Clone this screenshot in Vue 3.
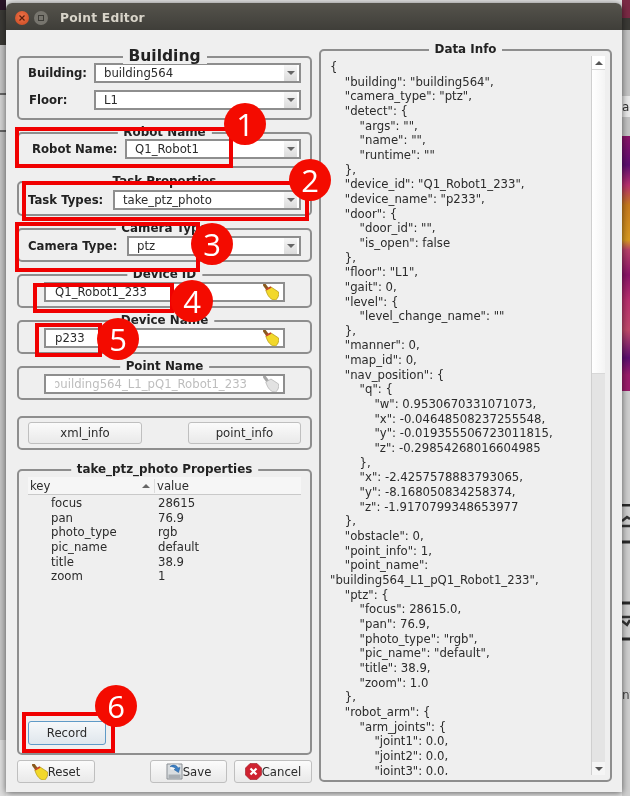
<script setup>
const jsonLines = [
  [0, '{'],
  [1, '"building": "building564",'],
  [1, '"camera_type": "ptz",'],
  [1, '"detect": {'],
  [2, '"args": "",'],
  [2, '"name": "",'],
  [2, '"runtime": ""'],
  [1, '},'],
  [1, '"device_id": "Q1_Robot1_233",'],
  [1, '"device_name": "p233",'],
  [1, '"door": {'],
  [2, '"door_id": "",'],
  [2, '"is_open": false'],
  [1, '},'],
  [1, '"floor": "L1",'],
  [1, '"gait": 0,'],
  [1, '"level": {'],
  [2, '"level_change_name": ""'],
  [1, '},'],
  [1, '"manner": 0,'],
  [1, '"map_id": 0,'],
  [1, '"nav_position": {'],
  [2, '"q": {'],
  [3, '"w": 0.9530670331071073,'],
  [3, '"x": -0.04648508237255548,'],
  [3, '"y": -0.019355506723011815,'],
  [3, '"z": -0.29854268016604985'],
  [2, '},'],
  [2, '"x": -2.4257578883793065,'],
  [2, '"y": -8.168050834258374,'],
  [2, '"z": -1.9170799348653977'],
  [1, '},'],
  [1, '"obstacle": 0,'],
  [1, '"point_info": 1,'],
  [1, '"point_name":'],
  [-0.15, '"building564_L1_pQ1_Robot1_233",'],
  [1, '"ptz": {'],
  [2, '"focus": 28615.0,'],
  [2, '"pan": 76.9,'],
  [2, '"photo_type": "rgb",'],
  [2, '"pic_name": "default",'],
  [2, '"title": 38.9,'],
  [2, '"zoom": 1.0'],
  [1, '},'],
  [1, '"robot_arm": {'],
  [2, '"arm_joints": {'],
  [3, '"joint1": 0.0,'],
  [3, '"joint2": 0.0,'],
  [3, '"joint3": 0.0,']
]
const props = [
  ['focus', '28615'],
  ['pan', '76.9'],
  ['photo_type', 'rgb'],
  ['pic_name', 'default'],
  ['title', '38.9'],
  ['zoom', '1']
]
const marks = [
  { n: 1, cls: 'm1' }, { n: 2, cls: 'm2' }, { n: 3, cls: 'm3' },
  { n: 4, cls: 'm4' }, { n: 5, cls: 'm5' }, { n: 6, cls: 'm6' }
]
</script>

<template>
  <div class="desktop">
    <div class="bg-left"></div>
    <div class="bg-right">
      <span class="bg-ac">ac</span>
      <span class="bg-nt">nt</span>
      <svg class="bg-icons" width="8" height="150" viewBox="0 0 8 150">
        <path d="M0 1h8M0 38h8M0 99h8M0 135h8" stroke="#2a2a2a" stroke-width="3" />
        <path d="M0 17l5-4 3 2M0 22h8" stroke="#333" stroke-width="2.500" fill="none" />
        <path d="M0 113h8M0 117l5 4 3-5" stroke="#333" stroke-width="2.500" fill="none" />
      </svg>
    </div>
    <div class="window">
      <header class="titlebar">
        <span class="btn-close">
          <svg width="8" height="8" viewBox="0 0 8 8"><path d="M1.500 1.500l5 5M6.500 1.500l-5 5" stroke="#5a1f0c" stroke-width="1.200" /></svg>
        </span>
        <span class="btn-min"><i></i></span>
        <span class="title">Point Editor</span>
      </header>
      <div class="content">
        <div class="left">
          <section class="group g-building">
            <h3 class="legend big">Building</h3>
            <div class="row"><label class="lbl">Building:</label><div class="combo w207"><span>building564</span><b class="arrow"></b></div></div>
            <div class="row"><label class="lbl">Floor:</label><div class="combo w207"><span>L1</span><b class="arrow"></b></div></div>
          </section>
          <section class="group g-robot one">
            <h3 class="legend">Robot Name</h3>
            <div class="row"><label class="lbl">Robot Name:</label><div class="combo w176"><span>Q1_Robot1</span><b class="arrow"></b></div></div>
          </section>
          <section class="group g-task one">
            <h3 class="legend">Task Properties</h3>
            <div class="row"><label class="lbl">Task Types:</label><div class="combo w188"><span>take_ptz_photo</span><b class="arrow"></b></div></div>
          </section>
          <section class="group g-cam one">
            <h3 class="legend">Camera Type</h3>
            <div class="row"><label class="lbl">Camera Type:</label><div class="combo w174"><span>ptz</span><b class="arrow"></b></div></div>
          </section>
          <section class="group g-input">
            <h3 class="legend">Device ID</h3>
            <div class="input"><span>Q1_Robot1_233</span>
              <svg class="broom" width="16" height="16" viewBox="0 0 16 16"><path d="M1.500 1l3 4" stroke="#8a5a1e" stroke-width="3" stroke-linecap="round" /><path d="M2.800 6L8 3l7.600 5c.5 3-.5 6.500-3 8C8 16.500 4.500 12 2.800 6z" fill="#f2d82a" stroke="#b9a01c" stroke-width=".8" /><path d="M3 5.800L8 3" stroke="#c8452a" stroke-width="1.800" /></svg>
            </div>
          </section>
          <section class="group g-input">
            <h3 class="legend">Device Name</h3>
            <div class="input"><span>p233</span>
              <svg class="broom" width="16" height="16" viewBox="0 0 16 16"><path d="M1.500 1l3 4" stroke="#8a5a1e" stroke-width="3" stroke-linecap="round" /><path d="M2.800 6L8 3l7.600 5c.5 3-.5 6.500-3 8C8 16.500 4.500 12 2.800 6z" fill="#f2d82a" stroke="#b9a01c" stroke-width=".8" /><path d="M3 5.800L8 3" stroke="#c8452a" stroke-width="1.800" /></svg>
            </div>
          </section>
          <section class="group g-input">
            <h3 class="legend">Point Name</h3>
            <div class="input disabled"><span class="clip">building564_L1_pQ1_Robot1_233</span>
              <svg class="broom" width="16" height="16" viewBox="0 0 16 16"><path d="M1.500 1l3 4" stroke="#a5a5a5" stroke-width="3" stroke-linecap="round" /><path d="M2.800 6L8 3l7.600 5c.5 3-.5 6.500-3 8C8 16.500 4.500 12 2.800 6z" fill="#e2e2e2" stroke="#b5b5b5" stroke-width=".8" /></svg>
            </div>
          </section>
          <section class="group g-actions">
            <button class="qbtn">xml_info</button>
            <button class="qbtn">point_info</button>
          </section>
          <section class="group g-props">
            <h3 class="legend">take_ptz_photo Properties</h3>
            <div class="tree-head">
              <span class="h-key">key<i class="sort"></i></span>
              <span class="h-val">value</span>
            </div>
            <div v-for="p in props" :key="p[0]" class="tree-row">
              <span class="t-key">{{ p[0] }}</span><span>{{ p[1] }}</span>
            </div>
            <button class="qbtn record">Record</button>
          </section>
          <div class="footer">
            <button class="qbtn ico reset">
              <svg width="16" height="16" viewBox="0 0 16 16"><path d="M1.500 1l3 4" stroke="#8a5a1e" stroke-width="3" stroke-linecap="round" /><path d="M2.800 6L8 3l7.600 5c.5 3-.5 6.500-3 8C8 16.500 4.500 12 2.800 6z" fill="#f2d82a" stroke="#b9a01c" stroke-width=".8" /><path d="M3 5.800L8 3" stroke="#c8452a" stroke-width="1.800" /></svg>Reset
            </button>
            <span class="spacer"></span>
            <button class="qbtn ico save">
              <svg width="17" height="17" viewBox="0 0 17 17"><path d="M1 1h15v15H1z" fill="#d9dde0" stroke="#8a8f94" /><path d="M2.500 11.500h12v4h-12z" fill="#a9aeb3" /><path d="M4.500 1.500h8v5h-8z" fill="#f4f6f7" /><path d="M4 3.500c3-2.500 7-1.500 8 1.500l2-.5-1.500 5-4.500-3 2-.5c-1-1.500-3.500-2.500-6-2.500z" fill="#3c7fc4" stroke="#1f5a96" stroke-width=".5" /></svg>Save
            </button>
            <button class="qbtn ico cancel">
              <svg width="17" height="17" viewBox="0 0 17 17"><path d="M5 .5h7L16.500 5v7L12 16.500H5L.5 12V5z" fill="#cf2230" stroke="#9a1822" stroke-width=".6" /><path d="M5.500 5.500l6 6M11.500 5.500l-6 6" stroke="#fff" stroke-width="2.200" /></svg>Cancel
            </button>
          </div>
        </div>
        <section class="group g-data">
          <h3 class="legend">Data Info</h3>
          <div class="json">
            <div v-for="(l, i) in jsonLines" :key="i" class="jl" :style="{ paddingLeft: l[0] * 14.8 + 'px' }">{{ l[1] }}</div>
          </div>
          <div class="scrollbar">
            <div class="sb-btn"><i class="tri up"></i></div>
            <div class="sb-thumb"></div>
            <div class="sb-trough"></div>
            <div class="sb-btn down"><i class="tri dn"></i></div>
          </div>
        </section>
      </div>
    </div>

    <div class="rbox b1"></div>
    <div class="rbox b2"></div>
    <div class="rbox b3"></div>
    <div class="rbox b4"></div>
    <div class="rbox b5"></div>
    <div class="rbox b6"></div>
    <div v-for="m in marks" :key="m.n" class="mark" :class="m.cls">{{ m.n }}</div>
  </div>
</template>

<style>
html, body { margin: 0; background: #d8d8d8; }
</style>

<style scoped>
.desktop {
  position: relative;
  width: 630px;
  height: 796px;
  overflow: hidden;
  font-family: "DejaVu Sans", sans-serif;
  font-size: 11.7px;
  color: #2b2b2b;
  filter: blur(0.35px);
  background: #e6e6e6;
}
.bg-left {
  position: absolute;
  left: 0; top: 0; width: 6px; height: 796px;
  background: linear-gradient(#2a1528 0, #2a1528 10px, #3b3a36 10px, #3b3a36 45px, #c6c6c6 45px, #c6c6c6 93px, #666 93px, #666 95px, #d4d4d4 95px, #d4d4d4 130px, #666 130px, #666 132px, #c4c4c4 132px, #c4c4c4 740px, #dedede 740px);
}
.bg-right {
  position: absolute;
  left: 622px; top: 0; width: 8px; height: 796px;
  overflow: hidden;
  background: linear-gradient(#7b2a45 0, #7b2a45 18px, #3b3a36 18px, #3b3a36 30px, #c4c4c4 30px, #c4c4c4 96px, #eaeaea 96px, #eaeaea 117px, #c4c4c4 117px, #c4c4c4 136px, #8a1468 136px, #5c0f70 165px, #b8306e 185px, #c77a1e 205px, #d89a20 240px, #b8406a 250px, #8a1468 275px, #b8306e 300px, #c04a6a 330px, #5c0f70 358px, #9a1c6a 375px, #9a1c6a 391px, #cfcfcf 391px, #cfcfcf 796px);
}
.bg-ac { position: absolute; left: 0; top: 100px; color: #333; font-size: 12px; line-height: 14px; }
.bg-nt { position: absolute; left: 0; top: 688px; color: #444; font-size: 12px; line-height: 14px; }
.bg-icons { position: absolute; left: 0; top: 504px; }

.window {
  position: absolute;
  left: 6px; top: 3px;
  width: 616px; height: 789px;
  background: #efefef;
  border-radius: 6px 6px 0 0;
  box-shadow: 0 1px 7px rgba(0, 0, 0, 0.6);
  display: flex;
  flex-direction: column;
}
.titlebar {
  height: 27px;
  flex: none;
  border-radius: 6px 6px 0 0;
  background: linear-gradient(#55534c, #3f3e39);
  display: flex;
  align-items: center;
  padding: 3px 0 0 9px;
  box-sizing: border-box;
}
.btn-close {
  width: 14px; height: 14px;
  border-radius: 50%;
  background: radial-gradient(circle at 50% 40%, #f0734a, #c8481f);
  display: flex; align-items: center; justify-content: center;
}
.btn-min {
  width: 14px; height: 14px;
  border-radius: 50%;
  margin-left: 5px;
  background: #77756e;
  display: flex; align-items: center; justify-content: center;
}
.btn-min i { width: 6px; height: 6px; border: 1px solid #3d3c37; box-sizing: border-box; display: block; }
.title { margin-left: 12px; font-weight: 700; font-size: 12.3px; color: #d8d4c9; letter-spacing: 0.2px; }

.content {
  flex: 1;
  display: flex;
  gap: 7px;
  padding: 19px 10px 9px 11px;
  min-height: 0;
}
.left { width: 295px; flex: none; display: flex; flex-direction: column; padding-top: 7px; }
.group {
  position: relative;
  box-sizing: border-box;
  border: 2px solid #8e8e8e;
  border-radius: 5px;
  flex: none;
}
.legend {
  position: absolute;
  top: -9px;
  left: 50%;
  transform: translateX(-50%);
  margin: 0;
  padding: 0 6px;
  background: #efefef;
  font-size: 11.9px;
  line-height: 14px;
  font-weight: 700;
  white-space: nowrap;
  color: #222;
}
.legend.big { font-size: 15.5px; line-height: 16px; top: -10px; }

.row { display: flex; align-items: center; justify-content: flex-end; gap: 7px; height: 20px; }
.lbl { font-weight: 700; flex: 1; white-space: nowrap; color: #222; }
.combo {
  box-sizing: border-box;
  height: 20px;
  flex: none;
  border: 2px solid #8e8e8e;
  background: #fff;
  display: flex;
  align-items: center;
  justify-content: space-between;
  padding-left: 8px;
}
.w207 { width: 207px; } .w176 { width: 176px; } .w188 { width: 188px; } .w174 { width: 174px; }
.arrow {
  width: 13px; height: 16px;
  margin-right: 2px;
  background-image: linear-gradient(#f6f6f6, #dcdcdc);
  position: relative;
  flex: none;
}
.arrow::after {
  content: "";
  position: absolute;
  left: 3px; top: 6px;
  border-left: 4px solid transparent;
  border-right: 4px solid transparent;
  border-top: 4px solid #666;
}
.g-building { height: 64px; padding: 5px 9px 0 10px; display: flex; flex-direction: column; gap: 7px; }
.one { padding: 5px 9px 0 10px; }
.g-robot { margin-top: 12px; height: 36px; }
.g-robot .lbl { padding-left: 3px; }
.g-task { margin-top: 13px; height: 35px; padding: 7px 9px 0 9px; }
.g-cam { margin-top: 12px; height: 34px; padding: 6px 9px 0 9px; }
.g-input { margin-top: 12px; height: 34px; padding: 6px 25px 0 25px; }
.input {
  box-sizing: border-box;
  height: 20px;
  border: 2px solid #8e8e8e;
  background: #fff;
  padding-left: 9px;
  display: flex;
  align-items: center;
  justify-content: space-between;
}
.broom { flex: none; margin-right: 4px; }
.disabled { color: #bdbdbd; }
.clip { width: 192px; overflow: hidden; direction: rtl; white-space: nowrap; text-align: left; }
.g-actions {
  margin-top: 16px;
  height: 34px;
  display: flex;
  justify-content: space-between;
  align-items: center;
  padding: 0 9px;
}
.g-actions .qbtn { height: 22px; }
.g-actions .qbtn:last-child { width: 113px; }
.qbtn {
  box-sizing: border-box;
  height: 23px;
  width: 114px;
  border: 1px solid #bfbfbf;
  border-radius: 3px;
  background: linear-gradient(#fbfbfb, #e9e9e9);
  font: inherit;
  color: #2b2b2b;
  padding: 0;
  display: flex;
  align-items: center;
  justify-content: center;
}
.g-props { margin-top: 19px; height: 286px; padding: 6px 9px 8px 9px; display: flex; flex-direction: column; }
.tree-head {
  display: flex;
  height: 17px;
  align-items: center;
  background: #f6f6f6;
  border-bottom: 1px solid #c9c9c9;
  margin-bottom: 1px;
  flex: none;
}
.h-key { width: 127px; padding-left: 2px; box-sizing: border-box; border-right: 1px solid #dcdcdc; display: flex; justify-content: space-between; align-items: center; padding-right: 4px; }
.h-val { padding-left: 2px; }
.sort { border-left: 4px solid transparent; border-right: 4px solid transparent; border-bottom: 4px solid #666; display: block; }
.tree-row { display: flex; height: 14.67px; line-height: 14.67px; flex: none; }
.t-key { width: 130px; padding-left: 23px; box-sizing: border-box; }
.record {
  margin-top: auto;
  width: 78px;
  height: 24px;
  border: 1px solid #5f9ac7;
  background: linear-gradient(#f6f8fa, #dfe6ec);
}
.footer { display: flex; margin-top: 5px; height: 23px; gap: 7px; flex: none; }
.footer .qbtn { width: 78px; }
.footer .save { width: 77px; }
.spacer { flex: 1; }
.ico svg { flex: none; }

.g-data { width: 293px; height: 733px; display: flex; }
.json {
  flex: 1;
  min-width: 0;
  overflow: hidden;
  height: 715px;
  margin-top: 9px;
  padding-left: 9px;
  line-height: 14.67px;
}
.jl { white-space: nowrap; height: 14.67px; }
.scrollbar {
  width: 13px;
  height: 719px;
  margin: 5px 5px 0 0;
  display: flex;
  flex-direction: column;
  border-left: 1px solid #cfcfcf;
  flex: none;
}
.sb-btn { height: 13px; flex: none; background: #fff; border-bottom: 1px solid #d8d8d8; display: flex; align-items: center; justify-content: center; }
.sb-btn.down { border-bottom: 0; background: #f5f5f5; }
.sb-thumb { height: 303px; flex: none; background: linear-gradient(90deg, #fff, #f4f4f4); border-bottom: 1px solid #d8d8d8; }
.sb-trough { flex: 1; background: #e4e4e4; }
.tri { display: block; border-left: 4px solid transparent; border-right: 4px solid transparent; }
.up { border-bottom: 4px solid #555; }
.dn { border-top: 4px solid #555; }

.rbox { position: absolute; box-sizing: border-box; border: 4px solid #f00000; }
.b1 { left: 15px; top: 127px; width: 218px; height: 41px; }
.b2 { left: 22px; top: 181px; width: 287px; height: 40px; }
.b3 { left: 15px; top: 222px; width: 185px; height: 50px; }
.b4 { left: 33px; top: 283px; width: 141px; height: 30px; }
.b5 { left: 35px; top: 323px; width: 67px; height: 34px; }
.b6 { left: 22px; top: 712px; width: 93px; height: 41px; }
.mark {
  position: absolute;
  width: 42px; height: 42px;
  border-radius: 50%;
  background: #f40b00;
  color: #fff;
  font-family: "Open Sans", sans-serif;
  font-size: 31px;
  line-height: 42px;
  text-align: center;
}
.m1 { left: 224px; top: 103px; }
.m2 { left: 289px; top: 159px; }
.m3 { left: 191px; top: 223px; }
.m4 { left: 171px; top: 280px; }
.m5 { left: 97px; top: 318px; }
.m6 { left: 95px; top: 685px; }
</style>
